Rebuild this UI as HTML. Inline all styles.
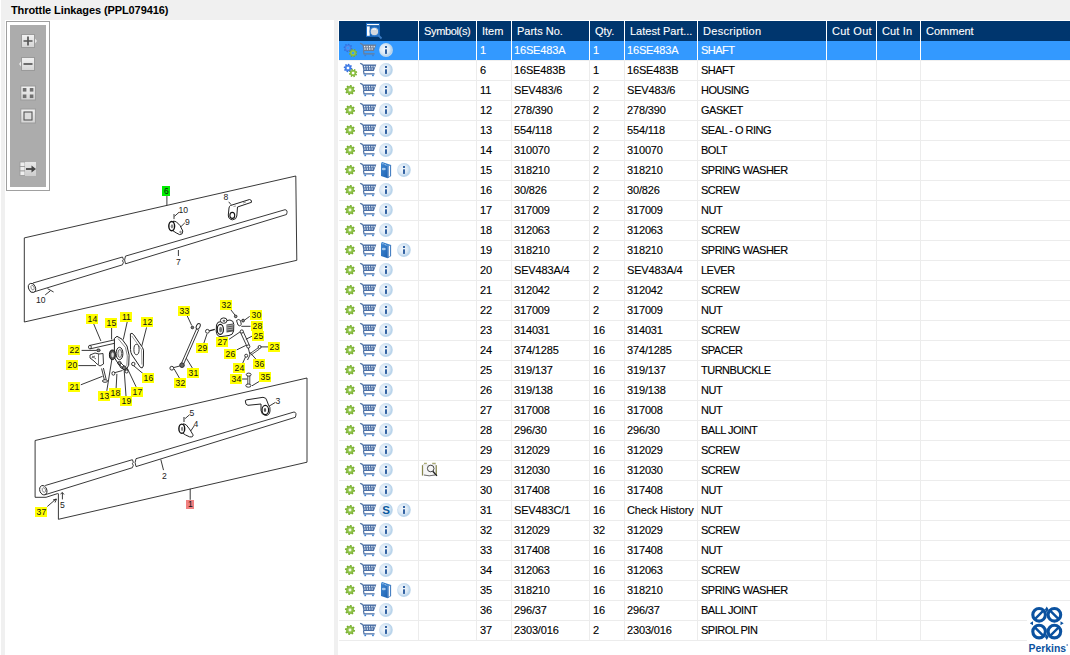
<!DOCTYPE html>
<html><head><meta charset="utf-8">
<style>
html,body{margin:0;padding:0;}
body{width:1070px;height:655px;position:relative;overflow:hidden;background:#f0f0f0;font-family:"Liberation Sans",sans-serif;font-size:11px;color:#000;}
.row{-webkit-text-stroke:0.12px currentColor;}
#title{position:absolute;left:11px;top:3px;font-weight:bold;font-size:11px;line-height:14px;letter-spacing:-0.1px;}
#lstrip{position:absolute;left:0;top:0;width:1px;height:655px;background:#fff;}
#left{position:absolute;left:5px;top:20px;width:329px;height:635px;background:#fff;}
#tb{position:absolute;left:6px;top:21px;width:42px;height:168px;border:1px solid #a0a0a0;background:#fff;}
#tbi{position:absolute;left:10px;top:25px;width:36px;height:162px;background:#acacac;}
#tbl{position:absolute;left:338px;top:20px;width:732px;height:635px;background:#fff;}
#hdr{position:absolute;left:339px;top:21px;width:731px;height:20px;background:#00366e;}
.h{position:absolute;top:21px;line-height:20px;color:#fff;white-space:nowrap;letter-spacing:0px;-webkit-text-stroke:0.1px #fff;}
.row{position:absolute;left:339px;width:731px;height:19px;border-bottom:1px solid #ececec;}
.row.sel{background:#3399ff;color:#fff;border-bottom-color:#f0f0f0;}
.c{position:absolute;top:0;line-height:19px;white-space:nowrap;}
.pn{letter-spacing:-0.15px;}
.ds{letter-spacing:-0.5px;}
.vl{position:absolute;top:41px;width:1px;height:600px;background:#ececec;}
.hvl{position:absolute;top:21px;width:1px;height:39px;background:#fff;}
.ic{position:absolute;overflow:visible;}
#logo{position:absolute;left:1026px;top:603px;width:44px;height:52px;background:#fff;}
</style></head><body>
<svg width="0" height="0" style="position:absolute">
<defs>
<radialGradient id="ig" cx="0.42" cy="0.45" r="0.6">
<stop offset="0" stop-color="#f4f8fc"/><stop offset="0.55" stop-color="#dce9f5"/><stop offset="0.85" stop-color="#b6d2ea"/><stop offset="1" stop-color="#cfe1f1"/>
</radialGradient>
<radialGradient id="gg" cx="0.5" cy="0.5" r="0.5">
<stop offset="0.3" stop-color="#9ccc55"/><stop offset="1" stop-color="#6fa828"/>
</radialGradient>
<radialGradient id="gb" cx="0.5" cy="0.5" r="0.5">
<stop offset="0.3" stop-color="#5b92f0"/><stop offset="1" stop-color="#2563d8"/>
</radialGradient>
<linearGradient id="bkg" x1="0" y1="0" x2="1" y2="1">
<stop offset="0" stop-color="#3d86d0"/><stop offset="0.6" stop-color="#2c72c0"/><stop offset="1" stop-color="#1a5eae"/>
</linearGradient>
<symbol id="ggear" viewBox="0 0 12 12"><path d="M9.82,5.23 L9.89,5.68 L11.10,6.18 L10.79,7.75 L9.48,7.76 L9.25,8.15 L8.97,8.52 L9.48,9.73 L8.15,10.62 L7.22,9.70 L6.77,9.82 L6.32,9.89 L5.82,11.10 L4.25,10.79 L4.24,9.48 L3.85,9.25 L3.48,8.97 L2.27,9.48 L1.38,8.15 L2.30,7.22 L2.18,6.77 L2.11,6.32 L0.90,5.82 L1.21,4.25 L2.52,4.24 L2.75,3.85 L3.03,3.48 L2.52,2.27 L3.85,1.38 L4.78,2.30 L5.23,2.18 L5.68,2.11 L6.18,0.90 L7.75,1.21 L7.76,2.52 L8.15,2.75 L8.52,3.03 L9.73,2.52 L10.62,3.85 L9.70,4.78Z" fill="url(#gg)"/><circle cx="6" cy="6" r="1.4" fill="#f2f8ea"/></symbol>
<symbol id="bgear" viewBox="0 0 16 16"><path d="M8.14,4.36 L8.19,4.74 L9.30,5.15 L9.04,6.47 L7.86,6.44 L7.67,6.77 L7.44,7.07 L7.93,8.15 L6.81,8.90 L6.00,8.04 L5.64,8.14 L5.26,8.19 L4.85,9.30 L3.53,9.04 L3.56,7.86 L3.23,7.67 L2.93,7.44 L1.85,7.93 L1.10,6.81 L1.96,6.00 L1.86,5.64 L1.81,5.26 L0.70,4.85 L0.96,3.53 L2.14,3.56 L2.33,3.23 L2.56,2.93 L2.07,1.85 L3.19,1.10 L4.00,1.96 L4.36,1.86 L4.74,1.81 L5.15,0.70 L6.47,0.96 L6.44,2.14 L6.77,2.33 L7.07,2.56 L8.15,2.07 L8.90,3.19 L8.04,4.00Z" fill="url(#gb)"/><circle cx="5" cy="5" r="1.3" fill="currentColor"/><path d="M13.18,10.31 L13.13,10.67 L14.07,11.38 L13.44,12.54 L12.33,12.15 L12.06,12.40 L11.77,12.61 L11.93,13.78 L10.67,14.16 L10.16,13.10 L9.79,13.08 L9.43,13.03 L8.72,13.97 L7.56,13.34 L7.95,12.23 L7.70,11.96 L7.49,11.67 L6.32,11.83 L5.94,10.57 L7.00,10.06 L7.02,9.69 L7.07,9.33 L6.13,8.62 L6.76,7.46 L7.87,7.85 L8.14,7.60 L8.43,7.39 L8.27,6.22 L9.53,5.84 L10.04,6.90 L10.41,6.92 L10.77,6.97 L11.48,6.03 L12.64,6.66 L12.25,7.77 L12.50,8.04 L12.71,8.33 L13.88,8.17 L14.26,9.43 L13.20,9.94Z" fill="url(#gg)"/><circle cx="10.1" cy="10" r="1.3" fill="currentColor"/></symbol>
<symbol id="cart" viewBox="0 0 18 16">
<path d="M1.2,1.2 L3.8,2.6" stroke="currentColor" stroke-width="1.3" fill="none"/>
<path d="M3.3,2.4 L17.3,2.4 L14.8,8.9 L4.5,8.9 Z" fill="currentColor"/>
<g fill="#f4f7fb"><rect x="5.1" y="3.9" width="1.15" height="1.5"/><rect x="7.5" y="3.9" width="1.15" height="1.5"/><rect x="9.9" y="3.9" width="1.15" height="1.5"/><rect x="12.3" y="3.9" width="1.15" height="1.5"/><rect x="14.6" y="3.9" width="1.1" height="1.5"/>
<rect x="5.4" y="6.3" width="1.15" height="1.4"/><rect x="7.8" y="6.3" width="1.15" height="1.4"/><rect x="10.2" y="6.3" width="1.15" height="1.4"/><rect x="12.6" y="6.3" width="1.1" height="1.4"/></g>
<path d="M4.5,8.5 L5,11.8 L15.6,11.8" stroke="currentColor" stroke-width="1.2" fill="none"/>
<rect x="5.4" y="12.6" width="1.7" height="1.6" fill="#3a82d6"/><rect x="13.1" y="12.6" width="1.7" height="1.6" fill="#3a82d6"/>
</symbol>

<symbol id="info" viewBox="0 0 16 16"><circle cx="8" cy="8" r="6.9" fill="url(#ig)"/><rect x="7" y="4" width="2" height="2" fill="#3363a3"/><rect x="7" y="7.3" width="2" height="4.6" fill="#3363a3"/></symbol>
<symbol id="scirc" viewBox="0 0 16 16"><circle cx="8" cy="8" r="6.9" fill="url(#ig)"/><text x="8" y="12.2" text-anchor="middle" font-family="Liberation Sans" font-weight="bold" font-size="11.5" fill="#0b5a9e">S</text></symbol>
<symbol id="book" viewBox="0 0 12 17" overflow="visible"><path d="M1,1 L2.2,0 L11.1,3 L7.8,4 Z" fill="#3a82cc"/><path d="M1,1 L7.8,4 L7.8,16.2 L1,14 Z" fill="url(#bkg)"/><path d="M7.8,4 L11.1,3 L11.1,14 L7.8,16.2 Z" fill="#1f64b4"/><path d="M8.6,4.3 L10.2,3.8 L10.2,14 L8.6,15 Z" fill="#f6f9fe"/><ellipse cx="3.8" cy="7" rx="2" ry="1.2" fill="#b9d4f0" opacity="0.85"/><path d="M2.5,2 L3.5,1.5 M5,3 L6,2.5" stroke="#bcd6f2" stroke-width="0.8"/></symbol>
<symbol id="symb" viewBox="0 0 18 16"><path d="M2,2.5 L8,3.2 L14.5,2.5 L14.5,13 L8,13.8 L2,13 Z" fill="#f6f6f6" stroke="#c4c4c4" stroke-width="0.6"/><path d="M1.4,3.2 V13.6 M15.3,3.2 V13.6" stroke="#7c7c3c" stroke-width="1"/><path d="M3,1.3 L5.9,1.3 M11.2,1.3 L14.7,1.3" stroke="#8c8c40" stroke-width="0.9"/><path d="M3,13 Q8,14.6 14,13" stroke="#555" stroke-width="0.8" fill="none"/><circle cx="9.7" cy="6.5" r="3.3" fill="none" stroke="#333" stroke-width="0.9"/><path d="M11.8,9.2 L15.9,13.9" stroke="#222" stroke-width="1.4"/></symbol>
<symbol id="hicon" viewBox="0 0 19 18"><rect x="1.5" y="1.3" width="12.8" height="13" fill="#1b5faa" stroke="#1e70c8" stroke-width="1"/><rect x="2" y="2" width="12" height="1.1" fill="#fff"/><rect x="2" y="4.4" width="2.7" height="9.4" fill="#fff"/><path d="M12.2,12.2 L16.5,16.5" stroke="#3b7cc4" stroke-width="1.8"/><circle cx="9.4" cy="9.4" r="4.3" fill="#d4d8de" stroke="#2a7ad0" stroke-width="1.1"/><path d="M7.5,7.5 Q9,6.5 11,7.5" stroke="#fff" stroke-width="0.9" fill="none"/></symbol>
</defs></svg>
<div id="lstrip"></div>
<div id="title">Throttle Linkages (PPL079416)</div>
<div id="left"></div>
<div id="tb"></div>
<div id="tbi"></div>
<svg style="position:absolute;left:0;top:0" width="60" height="200">
<defs><linearGradient id="tbg" x1="0" y1="0" x2="0" y2="1"><stop offset="0" stop-color="#f2f2f2"/><stop offset="1" stop-color="#d4d4d4"/></linearGradient></defs>
<g>
<rect x="21.5" y="34.5" width="13" height="13" fill="url(#tbg)" stroke="#9a9a9a" stroke-width="1"/>
<path d="M35,38.5 L37,41 L35,43.5 Z" fill="#e8e8e8"/>
<path d="M23.5,41 H32.5 M28,36.5 V45.5" stroke="#555" stroke-width="1.7"/>
<rect x="21.5" y="57.5" width="13" height="13" fill="url(#tbg)" stroke="#9a9a9a" stroke-width="1"/>
<path d="M21,61.5 L19,64 L21,66.5 Z" fill="#e8e8e8"/>
<path d="M23.5,64 H32.5" stroke="#555" stroke-width="1.7"/>
<rect x="20.8" y="86" width="14.6" height="14" fill="url(#tbg)" stroke="#9a9a9a" stroke-width="1"/>
<rect x="22.8" y="88" width="3.6" height="3.6" fill="#707070"/><rect x="29.8" y="88" width="3.6" height="3.6" fill="#707070"/>
<rect x="22.8" y="94.5" width="3.6" height="3.6" fill="#707070"/><rect x="29.8" y="94.5" width="3.6" height="3.6" fill="#707070"/>
<rect x="20.8" y="109" width="14.6" height="14" fill="url(#tbg)" stroke="#9a9a9a" stroke-width="1"/>
<rect x="24" y="112" width="8" height="8" fill="#ddd" stroke="#555" stroke-width="1.1"/>
<rect x="20" y="162" width="5" height="4.5" fill="#eee" stroke="#999" stroke-width="0.8"/>
<rect x="20" y="166.5" width="5" height="4.5" fill="#eee" stroke="#999" stroke-width="0.8"/>
<rect x="20" y="171" width="5" height="4.5" fill="#eee" stroke="#999" stroke-width="0.8"/>
<rect x="25" y="162" width="11" height="14" fill="url(#tbg)" opacity="0.85"/>
<path d="M26,169 H33" stroke="#444" stroke-width="1.8"/><path d="M31.5,165.5 L36,169 L31.5,172.5 Z" fill="#444"/>
</g></svg>
<svg style="position:absolute;left:0;top:0" width="334" height="655" viewBox="0 0 334 655">
<path d="M24.3,237.9 L295.8,176.0 L296.8,260.3 L24.3,322.0 L24.3,237.9 M166.9,195.4 L166.9,205.3 M178.4,250.0 L178.4,256.0 M45.2,294.9 L50.3,290.9 M47.5,288.6 L53.6,292.0 M174.0,214.0 L174.0,219.1 M174.5,216.3 L179.2,212.1 M180.1,227.5 L184.8,222.9 M228.7,201.8 L231.0,204.6 M35.1,440.5 L307.0,378.0 L307.0,462.2 L58.4,519.3 L58.4,493.5 M35.1,440.5 L35.1,497.3 L46.0,497.3 L57.8,493.5 M160.8,459.5 L163.5,470.1 M190.2,488.8 L190.2,499.8 M47.3,506.5 L56.0,499.0 M53.0,500.0 L56.5,499.0 L55.0,502.5 M62.4,499.4 L62.4,492.7 M60.5,494.0 L62.4,492.5 L64.0,494.5 M185.1,418.6 L189.6,414.7 M190.7,431.0 L194.1,426.0 M275.4,402.4 L268.5,406.5 M93.7,323.9 L100.9,341.0 M111.6,327.8 L111.6,339.5 M127.3,321.5 L123.3,339.5 M146.6,327.4 L141.8,345.9 M81.6,350.4 L96.0,350.4 M78.4,365.6 L96.0,365.6 M80.8,384.8 L102.5,376.3 M143.4,373.9 L132.9,365.1 M136.1,386.8 L127.3,368.3 M106.8,390.8 L112.1,357.9 M116.1,388.4 L116.9,373.9 M126.0,396.0 L124.1,369.1 M187.1,315.6 L191.7,325.5 M179.5,378.2 L174.2,369.0 M192.5,368.3 L186.4,358.3 M203.9,343.0 L207.0,333.9 M229.1,339.3 L240.5,331.6 M230.6,309.5 L236.0,316.4 M249.7,316.4 L244.4,320.2 M250.5,326.3 L241.3,326.3 M252.0,336.2 L245.9,339.3 M268.0,346.9 L260.4,346.9 M236.7,349.9 L245.9,345.4 M256.6,359.9 L249.7,352.2 M242.1,364.4 L245.9,356.1 M242.1,379.0 L247.4,379.0 M259.6,381.2 L252.0,385.8 M33.0,283.0 L122.5,257.0 M32.3,292.4 L122.5,264.8 M122.5,257.0 Q124.3,259.9 122.5,260.9 Q124.3,261.9 122.5,264.8 M125.5,256.1 L285.0,209.7 M125.5,263.8 L286.5,214.5 M125.5,256.1 Q123.7,260.0 125.5,263.8 M285.0,209.7 Q288.2,210.0 286.5,214.5 M45.2,485.5 L132.4,459.7 M44.8,494.8 L132.4,467.7 M132.4,459.7 Q134.2,462.7 132.4,463.7 Q134.2,464.7 132.4,467.7 M136.0,458.7 L294.0,412.0 M136.0,466.6 L295.3,417.3 M136.0,458.7 Q134.2,462.6 136.0,466.6 M294.0,412.0 Q297.2,412.3 295.3,417.3" fill="none" stroke="#222" stroke-width="0.9"/>
<path d="M173.5,221 Q176,220.5 180,225.5 L182.8,231 Q183,234.8 179.6,234.6 Q176,233 173,230.8 Z" fill="#fff" stroke="#222" stroke-width="1"/>
<ellipse cx="171.7" cy="226.1" rx="2.9" ry="4.6" fill="#fff" stroke="#111" stroke-width="1.4"/>
<ellipse cx="172" cy="226.3" rx="1.2" ry="2.1" fill="#888"/>
<circle cx="180.5" cy="232" r="0.8" fill="none" stroke="#333" stroke-width="0.6"/>
<path d="M230.5,205.5 L249.5,199.5 Q252,199.8 251.5,202.3 L237.5,207 L236.8,216 Q236.5,219.5 232.5,219.8 Q228.3,219.5 228.3,215 L229,208 Q229.3,206 230.5,205.5 Z" fill="#fff" stroke="#222" stroke-width="1"/>
<ellipse cx="232.3" cy="215.4" rx="2.4" ry="3" fill="#fff" stroke="#111" stroke-width="1.1"/>
<path d="M233.5,206.5 L236,206 M243,203 L246,202" stroke="#555" stroke-width="0.6"/>
<path d="M183.5,423.7 Q186,423.5 189.5,429 L193,434.8 Q193.5,437.5 189.5,436.8 Q185,435 182.5,433 Z" fill="#fff" stroke="#222" stroke-width="1"/>
<ellipse cx="181.8" cy="428.7" rx="2.9" ry="4.6" fill="#fff" stroke="#111" stroke-width="1.4"/>
<ellipse cx="182.1" cy="428.9" rx="1.2" ry="2.1" fill="#888"/>
<path d="M184,417 L184,422" stroke="#222" stroke-width="1"/>
<path d="M245.5,402 Q244.5,400 247,399.8 L263,397.3 Q266.5,397.5 267,401 L268.5,405 Q270.5,407 270,411 Q269.5,415.5 265.5,415.5 Q261.5,415 261,410.5 L261,404 L248,405.3 Q245.5,405 245.5,402 Z" fill="#fff" stroke="#222" stroke-width="1"/>
<ellipse cx="265.3" cy="410" rx="3.3" ry="4.6" fill="#fff" stroke="#111" stroke-width="1.2"/>
<ellipse cx="265" cy="410" rx="1.2" ry="1.9" fill="#555"/>
<path d="M89.5,345.5 L116,339.5 L116.8,342.8 L90.3,348.8 Z" fill="#fff" stroke="#222" stroke-width="0.9"/>
<ellipse cx="89.9" cy="347.1" rx="1.4" ry="1.8" fill="#fff" stroke="#222" stroke-width="0.9"/>
<ellipse cx="98.4" cy="350.3" rx="1.8" ry="1.3" fill="#888" stroke="#222" stroke-width="0.9"/>
<path d="M90,355 L95,353 L99,354 L103,353.5 L103.5,364 L100,366 L97,364 L94,361 L90,358 Z" fill="#fff" stroke="#222" stroke-width="0.9"/>
<path d="M98.5,354 L98.5,364.5 M92,356 L96,359 M91.5,358 L95,356" stroke="#333" stroke-width="0.7" fill="none"/>
<path d="M101.6,368.5 L104.4,380 M103.4,368 L106.2,379.5" stroke="#222" stroke-width="0.9" fill="none"/>
<ellipse cx="105" cy="381" rx="2.6" ry="1.3" fill="#fff" stroke="#222" stroke-width="0.9"/>
<path d="M114.4,338.4 L117,336.3 L122,339.2 L127,346 L129.1,355.2 L128.7,365.3 L126.2,369.5 L121,368 L114.4,357.7 Z" fill="#fff" stroke="#222" stroke-width="1"/>
<path d="M118,338.5 L125.5,347.5 L127.3,356 L126.8,366" fill="none" stroke="#555" stroke-width="0.7"/>
<ellipse cx="119.5" cy="353.5" rx="3.4" ry="6.2" fill="#fff" stroke="#222" stroke-width="1"/>
<ellipse cx="119.8" cy="353.5" rx="1.9" ry="4" fill="#e8e8e8" stroke="#444" stroke-width="0.8"/>
<ellipse cx="112.4" cy="354.8" rx="3" ry="4.8" fill="#555" stroke="#111" stroke-width="1"/>
<ellipse cx="112.6" cy="354.8" rx="1.3" ry="2.6" fill="#ddd"/>
<path d="M130.4,333.8 Q132,332.5 133.5,334.5 L142.5,347.5 Q144,350 143.5,353 L143.3,366 Q142.5,369 140.5,367.5 L132,355 Q130.5,352.5 130.5,349.5 Z" fill="#fff" stroke="#222" stroke-width="1"/>
<path d="M131.8,336 L141.5,349.5 L141.8,364.5" fill="none" stroke="#666" stroke-width="0.6"/>
<ellipse cx="136.5" cy="349.5" rx="2.6" ry="5.2" fill="#fff" stroke="#222" stroke-width="0.9"/>
<circle cx="133.3" cy="364" r="1.7" fill="#fff" stroke="#222" stroke-width="0.9"/>
<path d="M118,363 L126,371.5 M120,362 L128,370" stroke="#222" stroke-width="0.9"/>
<circle cx="119.5" cy="363" r="1.6" fill="#999" stroke="#222" stroke-width="0.9"/>
<circle cx="124.2" cy="367.8" r="1.9" fill="#777" stroke="#222" stroke-width="0.9"/>
<circle cx="126.6" cy="371.5" r="1.5" fill="#fff" stroke="#222" stroke-width="0.9"/>
<path d="M113.5,373 L122.5,370.5" stroke="#222" stroke-width="0.9"/>
<ellipse cx="113.4" cy="373.4" rx="1.5" ry="1.8" fill="#fff" stroke="#222" stroke-width="0.9"/>
<path d="M196.6,328.8 L181.5,363.2 M198.8,329.6 L183.7,364" stroke="#222" stroke-width="0.9" fill="none"/>
<ellipse cx="198.2" cy="326.3" rx="1.8" ry="3" transform="rotate(25 198.2 326.3)" fill="#fff" stroke="#222" stroke-width="0.9"/>
<circle cx="182" cy="365.2" r="2.3" fill="#666" stroke="#222" stroke-width="0.9"/>
<circle cx="171.8" cy="368.2" r="1.9" fill="#fff" stroke="#222" stroke-width="0.9"/>
<path d="M173.6,367.6 L179.8,366" stroke="#222" stroke-width="0.9"/>
<circle cx="192.4" cy="327.5" r="1.3" fill="#777" stroke="#222" stroke-width="0.9"/>
<circle cx="207.4" cy="331.3" r="1.9" fill="#fff" stroke="#222" stroke-width="0.9"/>
<path d="M209.3,330.8 L214.8,329.3" stroke="#222" stroke-width="1.2"/>
<path d="M216.5,325 Q217,321.5 221,321.5 L230,320 Q233.8,320.5 233.8,324.5 L233.6,331 Q233,335 229,335.5 L221,336.6 Q216.5,336.8 216.2,331 Z" fill="#fff" stroke="#222" stroke-width="1"/>
<ellipse cx="223.7" cy="320.6" rx="3.3" ry="2.7" fill="#fff" stroke="#222" stroke-width="1"/>
<ellipse cx="224" cy="320.8" rx="1.4" ry="1.1" fill="#666"/>
<ellipse cx="220.3" cy="329.4" rx="3.1" ry="5" fill="#fff" stroke="#111" stroke-width="1.2"/>
<ellipse cx="220.6" cy="329.6" rx="1.5" ry="2.8" fill="#777"/>
<path d="M226.5,324.5 L233,323.5 L233,331.5 L226.5,332.5 Z" fill="#555"/>
<path d="M227,326 L233,325 M227,328 L233,327 M227,330 L233,329" stroke="#eee" stroke-width="0.6"/>
<circle cx="235.7" cy="316.4" r="1.3" fill="#999" stroke="#222" stroke-width="0.9"/>
<path d="M236.5,320.5 Q238.5,318.5 240.5,320.5 L241.3,324.5 Q240,327 238,325 Z" fill="#fff" stroke="#222" stroke-width="0.9"/>
<circle cx="243.1" cy="320.6" r="1.4" fill="#888" stroke="#222" stroke-width="0.9"/>
<path d="M240.5,332.5 L247,346.5 M243.2,331.5 L249.5,345.5" stroke="#222" stroke-width="0.9" fill="none"/>
<circle cx="241.8" cy="331.5" r="1.6" fill="#fff" stroke="#222" stroke-width="0.9"/>
<circle cx="248.3" cy="346.5" r="1.6" fill="#fff" stroke="#222" stroke-width="0.9"/>
<path d="M248.3,348 L250,355 L247.5,360" stroke="#222" stroke-width="0.9" fill="none"/>
<path d="M250,353.6 L258.5,347.6 M251,355 L259.5,349" stroke="#222" stroke-width="0.8"/>
<circle cx="259.6" cy="347" r="1.5" fill="#fff" stroke="#222" stroke-width="0.9"/>
<circle cx="246.2" cy="355.7" r="1.5" fill="#fff" stroke="#222" stroke-width="0.9"/>
<ellipse cx="248.7" cy="374.6" rx="2.4" ry="1.5" fill="#fff" stroke="#222" stroke-width="0.9"/>
<path d="M247.8,376 L247.8,384 M249.8,376 L249.8,384" stroke="#222" stroke-width="0.8"/>
<ellipse cx="248.4" cy="385.6" rx="2.6" ry="1.6" fill="#fff" stroke="#222" stroke-width="0.9"/>
<ellipse cx="32" cy="287.9" rx="3.4" ry="4.7" transform="rotate(-20 32 287.9)" fill="#fff" stroke="#222" stroke-width="0.9"/>
<ellipse cx="32.6" cy="287.9" rx="1.53" ry="2.35" transform="rotate(-20 32 287.9)" fill="none" stroke="#555" stroke-width="0.6"/>
<ellipse cx="43.3" cy="490.2" rx="3.5" ry="4.8" transform="rotate(-20 43.3 490.2)" fill="#fff" stroke="#222" stroke-width="0.9"/>
<ellipse cx="43.9" cy="490.2" rx="1.57" ry="2.40" transform="rotate(-20 43.3 490.2)" fill="none" stroke="#555" stroke-width="0.6"/>
<text x="183.2" y="213.2" text-anchor="middle" font-family="Liberation Sans" font-size="8.6" fill="#222">10</text>
<text x="187.3" y="224.8" text-anchor="middle" font-family="Liberation Sans" font-size="8.6" fill="#222">9</text>
<text x="225.8" y="200.2" text-anchor="middle" font-family="Liberation Sans" font-size="8.6" fill="#222">8</text>
<text x="178.4" y="265" text-anchor="middle" font-family="Liberation Sans" font-size="8.6" fill="#222">7</text>
<text x="40.7" y="302.7" text-anchor="middle" font-family="Liberation Sans" font-size="8.6" fill="#222">10</text>
<text x="192" y="415.5" text-anchor="middle" font-family="Liberation Sans" font-size="8.6" fill="#222">5</text>
<text x="196" y="427.2" text-anchor="middle" font-family="Liberation Sans" font-size="8.6" fill="#222">4</text>
<text x="278" y="403.6" text-anchor="middle" font-family="Liberation Sans" font-size="8.6" fill="#222">3</text>
<text x="164.3" y="479" text-anchor="middle" font-family="Liberation Sans" font-size="8.6" fill="#222">2</text>
<text x="62.3" y="508.3" text-anchor="middle" font-family="Liberation Sans" font-size="8.6" fill="#222">5</text>
<rect x="86" y="314" width="12" height="10" fill="#ffff00" shape-rendering="crispEdges"/>
<text x="92.4" y="322.2" text-anchor="middle" font-family="Liberation Sans" font-size="8.6" fill="#111">14</text>
<rect x="105" y="318" width="12" height="10" fill="#ffff00" shape-rendering="crispEdges"/>
<text x="111.4" y="326.2" text-anchor="middle" font-family="Liberation Sans" font-size="8.6" fill="#111">15</text>
<rect x="120" y="312" width="12" height="10" fill="#ffff00" shape-rendering="crispEdges"/>
<text x="126.4" y="320.2" text-anchor="middle" font-family="Liberation Sans" font-size="8.6" fill="#111">11</text>
<rect x="141" y="317" width="12" height="10" fill="#ffff00" shape-rendering="crispEdges"/>
<text x="147.4" y="325.2" text-anchor="middle" font-family="Liberation Sans" font-size="8.6" fill="#111">12</text>
<rect x="68" y="345" width="12" height="10" fill="#ffff00" shape-rendering="crispEdges"/>
<text x="74.4" y="353.2" text-anchor="middle" font-family="Liberation Sans" font-size="8.6" fill="#111">22</text>
<rect x="66" y="360" width="12" height="10" fill="#ffff00" shape-rendering="crispEdges"/>
<text x="72.4" y="368.2" text-anchor="middle" font-family="Liberation Sans" font-size="8.6" fill="#111">20</text>
<rect x="68" y="382" width="12" height="10" fill="#ffff00" shape-rendering="crispEdges"/>
<text x="74.4" y="390.2" text-anchor="middle" font-family="Liberation Sans" font-size="8.6" fill="#111">21</text>
<rect x="142" y="373" width="12" height="10" fill="#ffff00" shape-rendering="crispEdges"/>
<text x="148.4" y="381.2" text-anchor="middle" font-family="Liberation Sans" font-size="8.6" fill="#111">16</text>
<rect x="131" y="387" width="12" height="10" fill="#ffff00" shape-rendering="crispEdges"/>
<text x="137.4" y="395.2" text-anchor="middle" font-family="Liberation Sans" font-size="8.6" fill="#111">17</text>
<rect x="98" y="391" width="12" height="10" fill="#ffff00" shape-rendering="crispEdges"/>
<text x="104.4" y="399.2" text-anchor="middle" font-family="Liberation Sans" font-size="8.6" fill="#111">13</text>
<rect x="109" y="388" width="12" height="10" fill="#ffff00" shape-rendering="crispEdges"/>
<text x="115.4" y="396.2" text-anchor="middle" font-family="Liberation Sans" font-size="8.6" fill="#111">18</text>
<rect x="120" y="396" width="12" height="10" fill="#ffff00" shape-rendering="crispEdges"/>
<text x="126.4" y="404.2" text-anchor="middle" font-family="Liberation Sans" font-size="8.6" fill="#111">19</text>
<rect x="178" y="306" width="12" height="10" fill="#ffff00" shape-rendering="crispEdges"/>
<text x="184.4" y="314.2" text-anchor="middle" font-family="Liberation Sans" font-size="8.6" fill="#111">33</text>
<rect x="220" y="300" width="12" height="10" fill="#ffff00" shape-rendering="crispEdges"/>
<text x="226.4" y="308.2" text-anchor="middle" font-family="Liberation Sans" font-size="8.6" fill="#111">32</text>
<rect x="250" y="310" width="12" height="10" fill="#ffff00" shape-rendering="crispEdges"/>
<text x="256.4" y="318.2" text-anchor="middle" font-family="Liberation Sans" font-size="8.6" fill="#111">30</text>
<rect x="251" y="321" width="12" height="10" fill="#ffff00" shape-rendering="crispEdges"/>
<text x="257.4" y="329.2" text-anchor="middle" font-family="Liberation Sans" font-size="8.6" fill="#111">28</text>
<rect x="252" y="331" width="12" height="10" fill="#ffff00" shape-rendering="crispEdges"/>
<text x="258.4" y="339.2" text-anchor="middle" font-family="Liberation Sans" font-size="8.6" fill="#111">25</text>
<rect x="268" y="342" width="12" height="10" fill="#ffff00" shape-rendering="crispEdges"/>
<text x="274.4" y="350.2" text-anchor="middle" font-family="Liberation Sans" font-size="8.6" fill="#111">23</text>
<rect x="216" y="337" width="12" height="10" fill="#ffff00" shape-rendering="crispEdges"/>
<text x="222.4" y="345.2" text-anchor="middle" font-family="Liberation Sans" font-size="8.6" fill="#111">27</text>
<rect x="196" y="343" width="12" height="10" fill="#ffff00" shape-rendering="crispEdges"/>
<text x="202.4" y="351.2" text-anchor="middle" font-family="Liberation Sans" font-size="8.6" fill="#111">29</text>
<rect x="224" y="349" width="12" height="10" fill="#ffff00" shape-rendering="crispEdges"/>
<text x="230.4" y="357.2" text-anchor="middle" font-family="Liberation Sans" font-size="8.6" fill="#111">26</text>
<rect x="253" y="359" width="12" height="10" fill="#ffff00" shape-rendering="crispEdges"/>
<text x="259.4" y="367.2" text-anchor="middle" font-family="Liberation Sans" font-size="8.6" fill="#111">36</text>
<rect x="233" y="363" width="12" height="10" fill="#ffff00" shape-rendering="crispEdges"/>
<text x="239.4" y="371.2" text-anchor="middle" font-family="Liberation Sans" font-size="8.6" fill="#111">24</text>
<rect x="187" y="368" width="12" height="10" fill="#ffff00" shape-rendering="crispEdges"/>
<text x="193.4" y="376.2" text-anchor="middle" font-family="Liberation Sans" font-size="8.6" fill="#111">31</text>
<rect x="174" y="378" width="12" height="10" fill="#ffff00" shape-rendering="crispEdges"/>
<text x="180.4" y="386.2" text-anchor="middle" font-family="Liberation Sans" font-size="8.6" fill="#111">32</text>
<rect x="230" y="374" width="12" height="10" fill="#ffff00" shape-rendering="crispEdges"/>
<text x="236.4" y="382.2" text-anchor="middle" font-family="Liberation Sans" font-size="8.6" fill="#111">34</text>
<rect x="259" y="372" width="12" height="10" fill="#ffff00" shape-rendering="crispEdges"/>
<text x="265.4" y="380.2" text-anchor="middle" font-family="Liberation Sans" font-size="8.6" fill="#111">35</text>
<rect x="35" y="507" width="12" height="10" fill="#ffff00" shape-rendering="crispEdges"/>
<text x="41.4" y="515.2" text-anchor="middle" font-family="Liberation Sans" font-size="8.6" fill="#111">37</text>
<rect x="162" y="186" width="8" height="10" fill="#00ee00" shape-rendering="crispEdges"/>
<text x="166.4" y="194.2" text-anchor="middle" font-family="Liberation Sans" font-size="8.6" fill="#111">6</text>
<rect x="186" y="500" width="8" height="9" fill="#f08080" shape-rendering="crispEdges"/>
<text x="190.4" y="507.2" text-anchor="middle" font-family="Liberation Sans" font-size="8.6" fill="#111">1</text>
</svg>
<div id="tbl"></div>
<div id="hdr"></div>
<div class="row sel" style="top:41px"><span class="c" style="left:141px">1</span><span class="c pn" style="left:175px">16SE483A</span><span class="c" style="left:254px">1</span><span class="c pn" style="left:288px">16SE483A</span><span class="c ds" style="left:362px">SHAFT</span></div>
<svg class="ic" style="left:343px;top:43px" width="16" height="16"><use href="#bgear" style="color:#3399ff"/></svg>
<svg class="ic" style="left:359px;top:42px" width="18" height="16"><use href="#cart" style="color:#6c7d96"/></svg>
<svg class="ic" style="left:378px;top:42px" width="16" height="16"><use href="#info"/></svg>
<div class="row" style="top:61px"><span class="c" style="left:141px">6</span><span class="c pn" style="left:175px">16SE483B</span><span class="c" style="left:254px">1</span><span class="c pn" style="left:288px">16SE483B</span><span class="c ds" style="left:362px">SHAFT</span></div>
<svg class="ic" style="left:343px;top:63px" width="16" height="16"><use href="#bgear" style="color:#fff"/></svg>
<svg class="ic" style="left:359px;top:62px" width="18" height="16"><use href="#cart" style="color:#4a6ea4"/></svg>
<svg class="ic" style="left:378px;top:62px" width="16" height="16"><use href="#info"/></svg>
<div class="row" style="top:81px"><span class="c" style="left:141px">11</span><span class="c pn" style="left:175px">SEV483/6</span><span class="c" style="left:254px">2</span><span class="c pn" style="left:288px">SEV483/6</span><span class="c ds" style="left:362px">HOUSING</span></div>
<svg class="ic" style="left:344px;top:84px" width="12" height="12"><use href="#ggear"/></svg>
<svg class="ic" style="left:359px;top:82px" width="18" height="16"><use href="#cart" style="color:#4a6ea4"/></svg>
<svg class="ic" style="left:378px;top:82px" width="16" height="16"><use href="#info"/></svg>
<div class="row" style="top:101px"><span class="c" style="left:141px">12</span><span class="c pn" style="left:175px">278/390</span><span class="c" style="left:254px">2</span><span class="c pn" style="left:288px">278/390</span><span class="c ds" style="left:362px">GASKET</span></div>
<svg class="ic" style="left:344px;top:104px" width="12" height="12"><use href="#ggear"/></svg>
<svg class="ic" style="left:359px;top:102px" width="18" height="16"><use href="#cart" style="color:#4a6ea4"/></svg>
<svg class="ic" style="left:378px;top:102px" width="16" height="16"><use href="#info"/></svg>
<div class="row" style="top:121px"><span class="c" style="left:141px">13</span><span class="c pn" style="left:175px">554/118</span><span class="c" style="left:254px">2</span><span class="c pn" style="left:288px">554/118</span><span class="c ds" style="left:362px">SEAL - O RING</span></div>
<svg class="ic" style="left:344px;top:124px" width="12" height="12"><use href="#ggear"/></svg>
<svg class="ic" style="left:359px;top:122px" width="18" height="16"><use href="#cart" style="color:#4a6ea4"/></svg>
<svg class="ic" style="left:378px;top:122px" width="16" height="16"><use href="#info"/></svg>
<div class="row" style="top:141px"><span class="c" style="left:141px">14</span><span class="c pn" style="left:175px">310070</span><span class="c" style="left:254px">2</span><span class="c pn" style="left:288px">310070</span><span class="c ds" style="left:362px">BOLT</span></div>
<svg class="ic" style="left:344px;top:144px" width="12" height="12"><use href="#ggear"/></svg>
<svg class="ic" style="left:359px;top:142px" width="18" height="16"><use href="#cart" style="color:#4a6ea4"/></svg>
<svg class="ic" style="left:378px;top:142px" width="16" height="16"><use href="#info"/></svg>
<div class="row" style="top:161px"><span class="c" style="left:141px">15</span><span class="c pn" style="left:175px">318210</span><span class="c" style="left:254px">2</span><span class="c pn" style="left:288px">318210</span><span class="c ds" style="left:362px">SPRING WASHER</span></div>
<svg class="ic" style="left:344px;top:164px" width="12" height="12"><use href="#ggear"/></svg>
<svg class="ic" style="left:359px;top:162px" width="18" height="16"><use href="#cart" style="color:#4a6ea4"/></svg>
<svg class="ic" style="left:380px;top:162px" width="12" height="17"><use href="#book"/></svg>
<svg class="ic" style="left:396px;top:162px" width="16" height="16"><use href="#info"/></svg>
<div class="row" style="top:181px"><span class="c" style="left:141px">16</span><span class="c pn" style="left:175px">30/826</span><span class="c" style="left:254px">2</span><span class="c pn" style="left:288px">30/826</span><span class="c ds" style="left:362px">SCREW</span></div>
<svg class="ic" style="left:344px;top:184px" width="12" height="12"><use href="#ggear"/></svg>
<svg class="ic" style="left:359px;top:182px" width="18" height="16"><use href="#cart" style="color:#4a6ea4"/></svg>
<svg class="ic" style="left:378px;top:182px" width="16" height="16"><use href="#info"/></svg>
<div class="row" style="top:201px"><span class="c" style="left:141px">17</span><span class="c pn" style="left:175px">317009</span><span class="c" style="left:254px">2</span><span class="c pn" style="left:288px">317009</span><span class="c ds" style="left:362px">NUT</span></div>
<svg class="ic" style="left:344px;top:204px" width="12" height="12"><use href="#ggear"/></svg>
<svg class="ic" style="left:359px;top:202px" width="18" height="16"><use href="#cart" style="color:#4a6ea4"/></svg>
<svg class="ic" style="left:378px;top:202px" width="16" height="16"><use href="#info"/></svg>
<div class="row" style="top:221px"><span class="c" style="left:141px">18</span><span class="c pn" style="left:175px">312063</span><span class="c" style="left:254px">2</span><span class="c pn" style="left:288px">312063</span><span class="c ds" style="left:362px">SCREW</span></div>
<svg class="ic" style="left:344px;top:224px" width="12" height="12"><use href="#ggear"/></svg>
<svg class="ic" style="left:359px;top:222px" width="18" height="16"><use href="#cart" style="color:#4a6ea4"/></svg>
<svg class="ic" style="left:378px;top:222px" width="16" height="16"><use href="#info"/></svg>
<div class="row" style="top:241px"><span class="c" style="left:141px">19</span><span class="c pn" style="left:175px">318210</span><span class="c" style="left:254px">2</span><span class="c pn" style="left:288px">318210</span><span class="c ds" style="left:362px">SPRING WASHER</span></div>
<svg class="ic" style="left:344px;top:244px" width="12" height="12"><use href="#ggear"/></svg>
<svg class="ic" style="left:359px;top:242px" width="18" height="16"><use href="#cart" style="color:#4a6ea4"/></svg>
<svg class="ic" style="left:380px;top:242px" width="12" height="17"><use href="#book"/></svg>
<svg class="ic" style="left:396px;top:242px" width="16" height="16"><use href="#info"/></svg>
<div class="row" style="top:261px"><span class="c" style="left:141px">20</span><span class="c pn" style="left:175px">SEV483A/4</span><span class="c" style="left:254px">2</span><span class="c pn" style="left:288px">SEV483A/4</span><span class="c ds" style="left:362px">LEVER</span></div>
<svg class="ic" style="left:344px;top:264px" width="12" height="12"><use href="#ggear"/></svg>
<svg class="ic" style="left:359px;top:262px" width="18" height="16"><use href="#cart" style="color:#4a6ea4"/></svg>
<svg class="ic" style="left:378px;top:262px" width="16" height="16"><use href="#info"/></svg>
<div class="row" style="top:281px"><span class="c" style="left:141px">21</span><span class="c pn" style="left:175px">312042</span><span class="c" style="left:254px">2</span><span class="c pn" style="left:288px">312042</span><span class="c ds" style="left:362px">SCREW</span></div>
<svg class="ic" style="left:344px;top:284px" width="12" height="12"><use href="#ggear"/></svg>
<svg class="ic" style="left:359px;top:282px" width="18" height="16"><use href="#cart" style="color:#4a6ea4"/></svg>
<svg class="ic" style="left:378px;top:282px" width="16" height="16"><use href="#info"/></svg>
<div class="row" style="top:301px"><span class="c" style="left:141px">22</span><span class="c pn" style="left:175px">317009</span><span class="c" style="left:254px">2</span><span class="c pn" style="left:288px">317009</span><span class="c ds" style="left:362px">NUT</span></div>
<svg class="ic" style="left:344px;top:304px" width="12" height="12"><use href="#ggear"/></svg>
<svg class="ic" style="left:359px;top:302px" width="18" height="16"><use href="#cart" style="color:#4a6ea4"/></svg>
<svg class="ic" style="left:378px;top:302px" width="16" height="16"><use href="#info"/></svg>
<div class="row" style="top:321px"><span class="c" style="left:141px">23</span><span class="c pn" style="left:175px">314031</span><span class="c" style="left:254px">16</span><span class="c pn" style="left:288px">314031</span><span class="c ds" style="left:362px">SCREW</span></div>
<svg class="ic" style="left:344px;top:324px" width="12" height="12"><use href="#ggear"/></svg>
<svg class="ic" style="left:359px;top:322px" width="18" height="16"><use href="#cart" style="color:#4a6ea4"/></svg>
<svg class="ic" style="left:378px;top:322px" width="16" height="16"><use href="#info"/></svg>
<div class="row" style="top:341px"><span class="c" style="left:141px">24</span><span class="c pn" style="left:175px">374/1285</span><span class="c" style="left:254px">16</span><span class="c pn" style="left:288px">374/1285</span><span class="c ds" style="left:362px">SPACER</span></div>
<svg class="ic" style="left:344px;top:344px" width="12" height="12"><use href="#ggear"/></svg>
<svg class="ic" style="left:359px;top:342px" width="18" height="16"><use href="#cart" style="color:#4a6ea4"/></svg>
<svg class="ic" style="left:378px;top:342px" width="16" height="16"><use href="#info"/></svg>
<div class="row" style="top:361px"><span class="c" style="left:141px">25</span><span class="c pn" style="left:175px">319/137</span><span class="c" style="left:254px">16</span><span class="c pn" style="left:288px">319/137</span><span class="c ds" style="left:362px">TURNBUCKLE</span></div>
<svg class="ic" style="left:344px;top:364px" width="12" height="12"><use href="#ggear"/></svg>
<svg class="ic" style="left:359px;top:362px" width="18" height="16"><use href="#cart" style="color:#4a6ea4"/></svg>
<svg class="ic" style="left:378px;top:362px" width="16" height="16"><use href="#info"/></svg>
<div class="row" style="top:381px"><span class="c" style="left:141px">26</span><span class="c pn" style="left:175px">319/138</span><span class="c" style="left:254px">16</span><span class="c pn" style="left:288px">319/138</span><span class="c ds" style="left:362px">NUT</span></div>
<svg class="ic" style="left:344px;top:384px" width="12" height="12"><use href="#ggear"/></svg>
<svg class="ic" style="left:359px;top:382px" width="18" height="16"><use href="#cart" style="color:#4a6ea4"/></svg>
<svg class="ic" style="left:378px;top:382px" width="16" height="16"><use href="#info"/></svg>
<div class="row" style="top:401px"><span class="c" style="left:141px">27</span><span class="c pn" style="left:175px">317008</span><span class="c" style="left:254px">16</span><span class="c pn" style="left:288px">317008</span><span class="c ds" style="left:362px">NUT</span></div>
<svg class="ic" style="left:344px;top:404px" width="12" height="12"><use href="#ggear"/></svg>
<svg class="ic" style="left:359px;top:402px" width="18" height="16"><use href="#cart" style="color:#4a6ea4"/></svg>
<svg class="ic" style="left:378px;top:402px" width="16" height="16"><use href="#info"/></svg>
<div class="row" style="top:421px"><span class="c" style="left:141px">28</span><span class="c pn" style="left:175px">296/30</span><span class="c" style="left:254px">16</span><span class="c pn" style="left:288px">296/30</span><span class="c ds" style="left:362px">BALL JOINT</span></div>
<svg class="ic" style="left:344px;top:424px" width="12" height="12"><use href="#ggear"/></svg>
<svg class="ic" style="left:359px;top:422px" width="18" height="16"><use href="#cart" style="color:#4a6ea4"/></svg>
<svg class="ic" style="left:378px;top:422px" width="16" height="16"><use href="#info"/></svg>
<div class="row" style="top:441px"><span class="c" style="left:141px">29</span><span class="c pn" style="left:175px">312029</span><span class="c" style="left:254px">16</span><span class="c pn" style="left:288px">312029</span><span class="c ds" style="left:362px">SCREW</span></div>
<svg class="ic" style="left:344px;top:444px" width="12" height="12"><use href="#ggear"/></svg>
<svg class="ic" style="left:359px;top:442px" width="18" height="16"><use href="#cart" style="color:#4a6ea4"/></svg>
<svg class="ic" style="left:378px;top:442px" width="16" height="16"><use href="#info"/></svg>
<div class="row" style="top:461px"><span class="c" style="left:141px">29</span><span class="c pn" style="left:175px">312030</span><span class="c" style="left:254px">16</span><span class="c pn" style="left:288px">312030</span><span class="c ds" style="left:362px">SCREW</span></div>
<svg class="ic" style="left:344px;top:464px" width="12" height="12"><use href="#ggear"/></svg>
<svg class="ic" style="left:359px;top:462px" width="18" height="16"><use href="#cart" style="color:#4a6ea4"/></svg>
<svg class="ic" style="left:378px;top:462px" width="16" height="16"><use href="#info"/></svg>
<svg class="ic" style="left:421px;top:462px" width="18" height="16"><use href="#symb"/></svg>
<div class="row" style="top:481px"><span class="c" style="left:141px">30</span><span class="c pn" style="left:175px">317408</span><span class="c" style="left:254px">16</span><span class="c pn" style="left:288px">317408</span><span class="c ds" style="left:362px">NUT</span></div>
<svg class="ic" style="left:344px;top:484px" width="12" height="12"><use href="#ggear"/></svg>
<svg class="ic" style="left:359px;top:482px" width="18" height="16"><use href="#cart" style="color:#4a6ea4"/></svg>
<svg class="ic" style="left:378px;top:482px" width="16" height="16"><use href="#info"/></svg>
<div class="row" style="top:501px"><span class="c" style="left:141px">31</span><span class="c pn" style="left:175px">SEV483C/1</span><span class="c" style="left:254px">16</span><span class="c pn" style="left:288px">Check History</span><span class="c ds" style="left:362px">NUT</span></div>
<svg class="ic" style="left:344px;top:504px" width="12" height="12"><use href="#ggear"/></svg>
<svg class="ic" style="left:359px;top:502px" width="18" height="16"><use href="#cart" style="color:#4a6ea4"/></svg>
<svg class="ic" style="left:378px;top:502px" width="16" height="16"><use href="#scirc"/></svg>
<svg class="ic" style="left:396px;top:502px" width="16" height="16"><use href="#info"/></svg>
<div class="row" style="top:521px"><span class="c" style="left:141px">32</span><span class="c pn" style="left:175px">312029</span><span class="c" style="left:254px">32</span><span class="c pn" style="left:288px">312029</span><span class="c ds" style="left:362px">SCREW</span></div>
<svg class="ic" style="left:344px;top:524px" width="12" height="12"><use href="#ggear"/></svg>
<svg class="ic" style="left:359px;top:522px" width="18" height="16"><use href="#cart" style="color:#4a6ea4"/></svg>
<svg class="ic" style="left:378px;top:522px" width="16" height="16"><use href="#info"/></svg>
<div class="row" style="top:541px"><span class="c" style="left:141px">33</span><span class="c pn" style="left:175px">317408</span><span class="c" style="left:254px">16</span><span class="c pn" style="left:288px">317408</span><span class="c ds" style="left:362px">NUT</span></div>
<svg class="ic" style="left:344px;top:544px" width="12" height="12"><use href="#ggear"/></svg>
<svg class="ic" style="left:359px;top:542px" width="18" height="16"><use href="#cart" style="color:#4a6ea4"/></svg>
<svg class="ic" style="left:378px;top:542px" width="16" height="16"><use href="#info"/></svg>
<div class="row" style="top:561px"><span class="c" style="left:141px">34</span><span class="c pn" style="left:175px">312063</span><span class="c" style="left:254px">16</span><span class="c pn" style="left:288px">312063</span><span class="c ds" style="left:362px">SCREW</span></div>
<svg class="ic" style="left:344px;top:564px" width="12" height="12"><use href="#ggear"/></svg>
<svg class="ic" style="left:359px;top:562px" width="18" height="16"><use href="#cart" style="color:#4a6ea4"/></svg>
<svg class="ic" style="left:378px;top:562px" width="16" height="16"><use href="#info"/></svg>
<div class="row" style="top:581px"><span class="c" style="left:141px">35</span><span class="c pn" style="left:175px">318210</span><span class="c" style="left:254px">16</span><span class="c pn" style="left:288px">318210</span><span class="c ds" style="left:362px">SPRING WASHER</span></div>
<svg class="ic" style="left:344px;top:584px" width="12" height="12"><use href="#ggear"/></svg>
<svg class="ic" style="left:359px;top:582px" width="18" height="16"><use href="#cart" style="color:#4a6ea4"/></svg>
<svg class="ic" style="left:380px;top:582px" width="12" height="17"><use href="#book"/></svg>
<svg class="ic" style="left:396px;top:582px" width="16" height="16"><use href="#info"/></svg>
<div class="row" style="top:601px"><span class="c" style="left:141px">36</span><span class="c pn" style="left:175px">296/37</span><span class="c" style="left:254px">16</span><span class="c pn" style="left:288px">296/37</span><span class="c ds" style="left:362px">BALL JOINT</span></div>
<svg class="ic" style="left:344px;top:604px" width="12" height="12"><use href="#ggear"/></svg>
<svg class="ic" style="left:359px;top:602px" width="18" height="16"><use href="#cart" style="color:#4a6ea4"/></svg>
<svg class="ic" style="left:378px;top:602px" width="16" height="16"><use href="#info"/></svg>
<div class="row" style="top:621px"><span class="c" style="left:141px">37</span><span class="c pn" style="left:175px">2303/016</span><span class="c" style="left:254px">2</span><span class="c pn" style="left:288px">2303/016</span><span class="c ds" style="left:362px">SPIROL PIN</span></div>
<svg class="ic" style="left:344px;top:624px" width="12" height="12"><use href="#ggear"/></svg>
<svg class="ic" style="left:359px;top:622px" width="18" height="16"><use href="#cart" style="color:#4a6ea4"/></svg>
<svg class="ic" style="left:378px;top:622px" width="16" height="16"><use href="#info"/></svg>
<div class="vl" style="left:418px"></div><div class="hvl" style="left:418px"></div>
<div class="vl" style="left:476px"></div><div class="hvl" style="left:476px"></div>
<div class="vl" style="left:511px"></div><div class="hvl" style="left:511px"></div>
<div class="vl" style="left:589px"></div><div class="hvl" style="left:589px"></div>
<div class="vl" style="left:624px"></div><div class="hvl" style="left:624px"></div>
<div class="vl" style="left:697px"></div><div class="hvl" style="left:697px"></div>
<div class="vl" style="left:826px"></div><div class="hvl" style="left:826px"></div>
<div class="vl" style="left:876px"></div><div class="hvl" style="left:876px"></div>
<div class="vl" style="left:920px"></div><div class="hvl" style="left:920px"></div>
<span class="h" style="left:424px;letter-spacing:-0.35px">Symbol(s)</span>
<span class="h" style="left:482px">Item</span>
<span class="h" style="left:517px">Parts No.</span>
<span class="h" style="left:595px">Qty.</span>
<span class="h" style="left:630px">Latest Part...</span>
<span class="h" style="left:703px;letter-spacing:0.3px">Description</span>
<span class="h" style="left:832px;letter-spacing:0.28px">Cut Out</span>
<span class="h" style="left:882px;letter-spacing:0.15px">Cut In</span>
<span class="h" style="left:926px">Comment</span>
<svg class="ic" style="left:365px;top:22px" width="19" height="18"><use href="#hicon"/></svg>
<div style="position:absolute;left:1027px;top:601px;width:43px;height:54px;background:#fff"></div>
<svg style="position:absolute;left:1025px;top:600px" width="45" height="55" viewBox="0 0 45 55">
<g fill="none" stroke="#0b52a0" stroke-width="3.1">
<circle cx="14.1" cy="14.8" r="6.3"/><circle cx="29.4" cy="14.8" r="6.3"/>
<circle cx="14.1" cy="31.6" r="6.3"/><circle cx="29.4" cy="31.6" r="6.3"/>
<path d="M9.6,19.3 L18.6,10.3 M24.9,10.3 L33.9,19.3 M9.6,27.1 L18.6,36.1 M24.9,36.1 L33.9,27.1" stroke-width="2.4"/>
</g>
<path d="M21.75,6.5 L23.6,9.5 L21.75,12.5 L19.9,9.5 Z M21.75,34 L23.6,37 L21.75,40 L19.9,37 Z M4.8,23.2 L8,21.2 L8,25.2 Z M38.7,23.2 L35.5,21.2 L35.5,25.2 Z" fill="#0b52a0"/>
<text x="3.6" y="52.4" font-family="Liberation Sans" font-weight="bold" font-size="11" fill="#0b52a0" textLength="37.5" lengthAdjust="spacingAndGlyphs">Perkins</text>
<circle cx="42.2" cy="45" r="0.9" fill="#7a9cc8"/>
</svg>
</body></html>
